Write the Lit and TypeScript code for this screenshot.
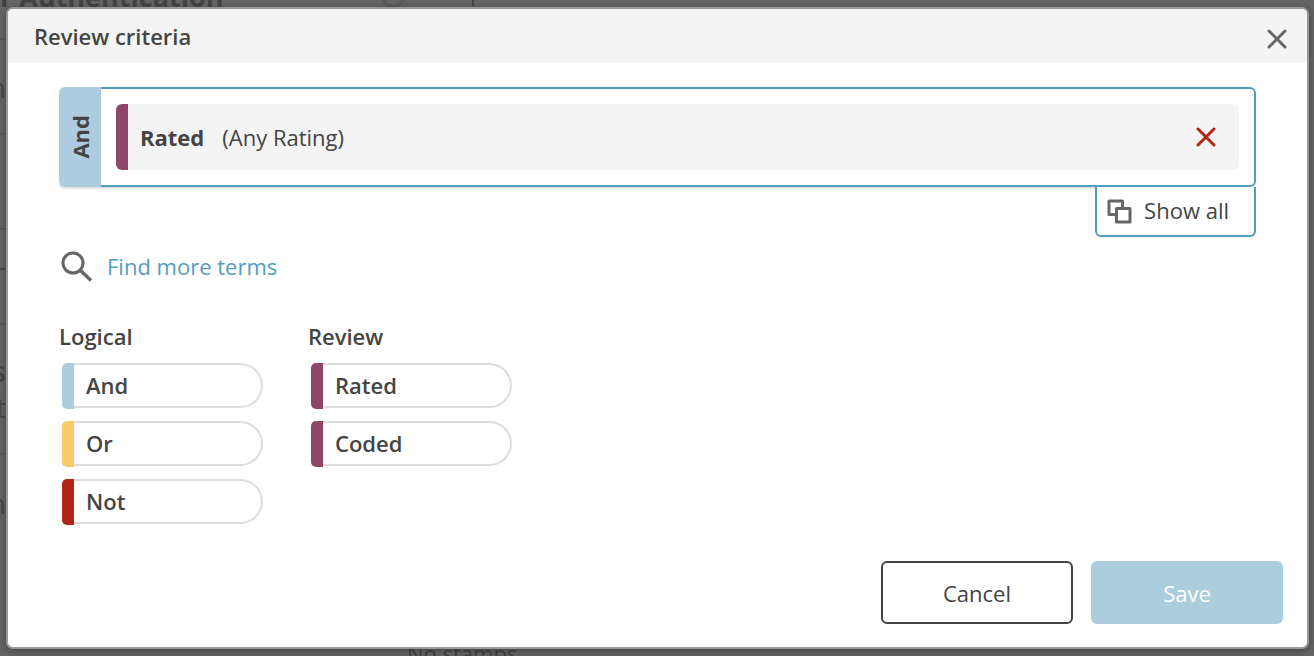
import { LitElement, html, css, svg } from "lit";
import { customElement, property } from "lit/decorators.js";

const cross = svg`<path d="M2 2 L18 18 M18 2 L2 18" />`;

@customElement("term-pill")
class TermPill extends LitElement {
  @property() tone = "and";
  @property() label = "";

  static styles = css`
    :host { display: block; }
    .pill {
      display: flex;
      align-items: stretch;
      width: 100%;
      height: 46px;
      padding: 0;
      border: 0;
      background: none;
      font: 600 22px/30px "Open Sans", sans-serif;
      color: #444;
      text-align: left;
      cursor: grab;
    }
    .tab { width: 12px; border-radius: 5px 0 0 5px; }
    .and { background: #adcce0; }
    .or { background: #f7cb68; }
    .not { background: #b02718; }
    .review { background: #8e4768; }
    .text {
      flex: 1;
      box-sizing: border-box;
      height: 45px;
      padding: 5px 12px;
      border: 2px solid #ddd;
      border-left: 0;
      border-radius: 0 23px 23px 0;
      background: #fff;
    }
  `;

  render() {
    return html`<button class="pill" type="button">
      <span class="tab ${this.tone}"></span><span class="text">${this.label}</span>
    </button>`;
  }
}

@customElement("app-root")
class AppRoot extends LitElement {
  static styles = css`
    :host {
      display: grid;
      height: 100vh;
      overflow: hidden;
      background: #656565;
      font: 400 22px/30px "Open Sans", sans-serif;
      color: #444;
    }
    .page, .overlay { grid-area: 1 / 1; min-width: 0; min-height: 0; }
    .page { display: flex; flex-direction: column; overflow: hidden; color: #444; }
    .page-head {
      display: flex;
      align-items: flex-end;
      height: 12px;
      font: 700 27px/30px "Open Sans", sans-serif;
      white-space: nowrap;
      flex: none;
    }
    .page-head svg { margin-left: 155px; flex: none; }
    .rows { flex: 1; min-height: 0; width: 6px; font-size: 28px; line-height: 36px; color: #484848; }
    .row {
      display: flex;
      flex-direction: column;
      justify-content: center;
      align-items: flex-end;
      box-sizing: border-box;
      height: 95px;
      border-bottom: 2px solid #5b5b5b;
    }
    .gap { height: 28px; }
    .tall { height: 130px; }
    .last { border: 0; }
    .row b { font-weight: 600; }
    .stamps { padding-left: 407px; height: 18px; line-height: 30px; flex: none; }
    .overlay { display: flex; padding: 7px 5px 7px 6px; }
    .dialog {
      flex: 1;
      display: flex;
      flex-direction: column;
      border: 2px solid #999;
      border-radius: 7px;
      background: #fff;
      box-shadow: 0 2px 8px rgba(0, 0, 0, 0.35);
      overflow: hidden;
    }
    .head {
      display: flex;
      align-items: center;
      justify-content: space-between;
      height: 54px;
      padding: 0 20px 0 26px;
      background: #f4f4f4;
    }
    h1, h2 { margin: 0; font-size: 22px; line-height: 30px; font-weight: 600; }
    .icon-button {
      display: flex;
      padding: 0;
      border: 0;
      background: none;
      cursor: pointer;
    }
    .icon-button svg { fill: none; stroke-width: 3; stroke-linecap: round; }
    .close { padding-top: 6px; stroke: #666; }
    .remove { stroke: #b02718; }
    .body { flex: 1; padding: 24px 51px 0; }
    .group { display: flex; height: 100px; border-radius: 6px; box-shadow: 0 2px 2px rgba(0, 0, 0, 0.12); }
    .operator {
      display: flex;
      align-items: center;
      justify-content: center;
      width: 42px;
      border-radius: 6px 0 0 6px;
      background: #adcce0;
      font-weight: 700;
    }
    .operator span { writing-mode: vertical-rl; transform: rotate(180deg); }
    .terms {
      flex: 1;
      display: flex;
      padding: 15px;
      border: 2px solid #539dbd;
      border-left: 0;
      border-radius: 0 6px 6px 0;
      background: #fff;
    }
    .term {
      flex: 1;
      display: flex;
      align-items: center;
      padding: 0 23px 0 12px;
      border-left: 12px solid #8e4768;
      border-radius: 6px;
      background: #f4f4f4;
    }
    .term strong { margin-right: 18px; }
    .term .icon-button { margin-left: auto; }
    .show-all {
      display: flex;
      align-items: center;
      gap: 12px;
      height: 50px;
      margin-left: auto;
      padding: 0 25px 2px 10px;
      border: 2px solid #539dbd;
      border-top: 0;
      border-radius: 0 0 6px 6px;
      background: #fff;
      font: inherit;
      color: inherit;
      cursor: pointer;
    }
    .find {
      display: flex;
      align-items: center;
      gap: 14px;
      width: max-content;
      margin-top: 13px;
      color: #539dbd;
      text-decoration: none;
    }
    .columns { display: flex; gap: 45px; margin-top: 39px; }
    .column { width: 204px; }
    .list { display: grid; gap: 12px; padding: 12px 0 0 3px; }
    .foot { display: flex; justify-content: flex-end; gap: 18px; padding: 0 24px 23px; }
    .action {
      width: 192px;
      height: 63px;
      padding: 0;
      border: 2px solid #444;
      border-radius: 6px;
      background: #fff;
      font: inherit;
      color: #444;
    }
    .primary { border-color: #abcdde; background: #abcdde; color: #fff; }
  `;

  render() {
    return html`
      <div class="page" aria-hidden="true">
        <div class="page-head">
          r Authentication
          <svg width="100" height="12" viewBox="0 0 100 12" fill="none">
            <circle cx="15" cy="-6" r="12" stroke="#5b5b5b" stroke-width="3" />
            <path d="M95 0V6" stroke="#484848" stroke-width="2" />
          </svg>
        </div>
        <div class="rows">
          <div class="row gap"></div>
          <div class="row"><span>n</span></div>
          <div class="row"></div>
          <div class="row"><span>T</span></div>
          <div class="row tall"><b>s</b><span>it</span></div>
          <div class="row last"><span>n</span></div>
        </div>
        <div class="stamps">No stamps</div>
      </div>
      <div class="overlay">
        <section class="dialog" role="dialog" aria-labelledby="title">
          <header class="head">
            <h1 id="title">Review criteria</h1>
            <button class="icon-button close" type="button" aria-label="Close">
              <svg width="20" height="20" viewBox="0 0 20 20">${cross}</svg>
            </button>
          </header>
          <div class="body">
            <div class="group">
              <div class="operator"><span>And</span></div>
              <div class="terms">
                <div class="term">
                  <strong>Rated</strong><span>(Any Rating)</span>
                  <button class="icon-button remove" type="button" aria-label="Remove Rated">
                    <svg width="20" height="20" viewBox="0 0 20 20">${cross}</svg>
                  </button>
                </div>
              </div>
            </div>
            <button class="show-all" type="button">
              <svg width="25" height="27" viewBox="0 -2 25 27" fill="none" stroke="#666" stroke-width="3" stroke-linejoin="round">
                <path d="M8.5 15.5H2V2H15.5V8.5" /><path d="M9.5 9.5H23V23H9.5Z" />
              </svg>
              Show all
            </button>
            <a class="find" href="#terms">
              <svg width="34" height="32" viewBox="0 -1 34 32" fill="none" stroke="#666" stroke-width="3">
                <circle cx="14" cy="12" r="10" /><path d="M21 19L32 29.5" stroke-width="3.4" />
              </svg>
              Find more terms
            </a>
            <div class="columns">
              <section class="column">
                <h2>Logical</h2>
                <div class="list">
                  <term-pill tone="and" label="And"></term-pill>
                  <term-pill tone="or" label="Or"></term-pill>
                  <term-pill tone="not" label="Not"></term-pill>
                </div>
              </section>
              <section class="column">
                <h2>Review</h2>
                <div class="list">
                  <term-pill tone="review" label="Rated"></term-pill>
                  <term-pill tone="review" label="Coded"></term-pill>
                </div>
              </section>
            </div>
          </div>
          <footer class="foot">
            <button class="action" type="button">Cancel</button>
            <button class="action primary" type="button">Save</button>
          </footer>
        </section>
      </div>
    `;
  }
}
